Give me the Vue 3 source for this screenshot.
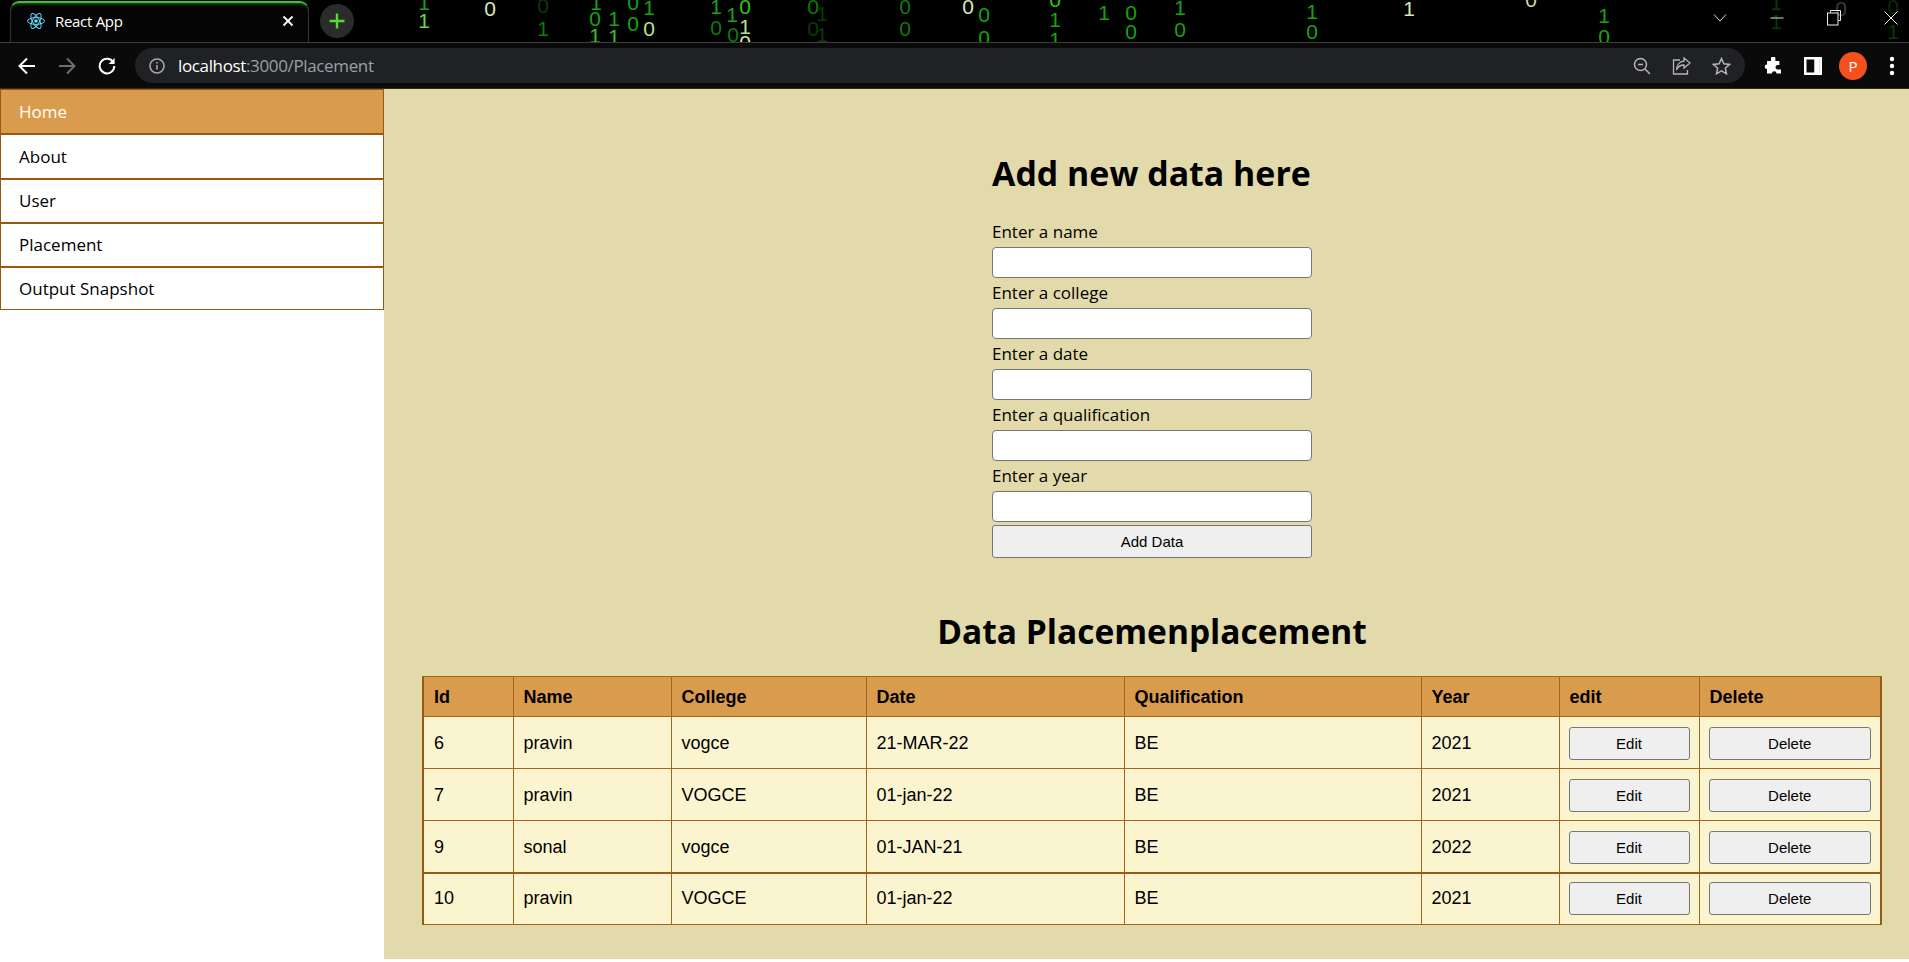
<template>
  <div class="app">
    <!-- Barra del navegador -->
    <header class="browser">
      <div class="strip">
        <span
          v-for="(d, i) in digits"
          :key="i"
          class="digit"
          :style="{ left: d[0] + 'px', top: d[1] + 'px', color: d[3] }"
        >{{ d[2] }}</span>

        <div class="tab">
          <svg class="favicon" width="20" height="20" viewBox="0 0 20 20" fill="none" stroke="#61dafb" stroke-width="1">
            <circle cx="10" cy="10" r="1.8" fill="#61dafb" stroke="none" />
            <ellipse cx="10" cy="10" rx="8.5" ry="3.4" />
            <ellipse cx="10" cy="10" rx="8.5" ry="3.4" transform="rotate(60 10 10)" />
            <ellipse cx="10" cy="10" rx="8.5" ry="3.4" transform="rotate(120 10 10)" />
          </svg>
          <span class="tab-title">React App</span>
          <svg class="tab-close" width="12" height="12" viewBox="0 0 12 12" stroke="#fff" stroke-width="1.8">
            <path d="M1.5 1.5l9 9M10.5 1.5l-9 9" />
          </svg>
        </div>
        <button class="new-tab">
          <svg width="16" height="16" viewBox="0 0 16 16" stroke="#58d936" stroke-width="2.4">
            <path d="M8 0.5v15M0.5 8h15" />
          </svg>
        </button>

        <div class="win-controls">
          <svg width="14" height="10" viewBox="0 0 14 10" fill="none" stroke="#ddd" stroke-width="1">
            <path d="M1 1.5l6 6.5 6-6.5" />
          </svg>
          <svg width="14" height="14" viewBox="0 0 14 14" stroke="#ddd" stroke-width="1">
            <path d="M0.5 7h13" />
          </svg>
          <svg width="14" height="16" viewBox="0 0 14 16" fill="none" stroke="#eee" stroke-width="1">
            <path d="M3.5 2.5v-2h10v10h-2" />
            <rect x="0.5" y="3" width="10.5" height="12" fill="#000" />
          </svg>
          <svg width="14" height="14" viewBox="0 0 14 14" stroke="#eee" stroke-width="1">
            <path d="M0.5 0.5l13 13M13.5 0.5l-13 13" />
          </svg>
        </div>
      </div>

      <div class="toolbar">
        <svg class="nav-icon" width="18" height="18" viewBox="0 0 18 18" fill="none" stroke="#fff" stroke-width="2">
          <path d="M17 9H2M9 1.5L1.5 9 9 16.5" />
        </svg>
        <svg class="nav-icon" width="18" height="18" viewBox="0 0 18 18" fill="none" stroke="#6e6e6e" stroke-width="2">
          <path d="M1 9h15M9 1.5L16.5 9 9 16.5" />
        </svg>
        <svg class="nav-icon" width="18" height="18" viewBox="0 0 18 18" fill="none" stroke="#fff" stroke-width="2">
          <path d="M15.2 5.2A7.3 7.3 0 1 0 16.3 9" />
          <path d="M16.6 1v6h-6z" fill="#fff" stroke="none" />
        </svg>

        <div class="omnibox">
          <svg width="16" height="16" viewBox="0 0 16 16" fill="none" stroke="#a8a8a8" stroke-width="1.6">
            <circle cx="8" cy="8" r="7" />
            <path d="M8 7v4.5M8 4v1.6" />
          </svg>
          <span class="url"><span class="host">localhost</span>:3000/Placement</span>
          <div class="omni-actions">
            <svg width="18" height="18" viewBox="0 0 18 18" fill="none" stroke="#b4b4b4" stroke-width="1.5">
              <circle cx="7.5" cy="7.5" r="6" />
              <path d="M5 7.5h5M12 12l5 5" />
            </svg>
            <svg width="19" height="19" viewBox="0 0 19 19" fill="none" stroke="#b4b4b4" stroke-width="1.3">
              <path d="M8 4H1.5v14h14v-4" />
              <path d="M12 2l6 5-6 5V9C8.500 9 6 10.500 4.500 14 4.500 9 7.500 5.500 12 5z" />
            </svg>
            <svg width="19" height="18" viewBox="0 0 19 18" fill="none" stroke="#b4b4b4" stroke-width="1.5">
              <path d="M9.500 1.500l2.400 5.300 5.700 0.600-4.300 3.800 1.200 5.600-5-2.900-5 2.900 1.200-5.600-4.300-3.800 5.700-0.600z" />
            </svg>
          </div>
        </div>

        <div class="tools">
          <svg width="18" height="18" viewBox="0 0 18 18" fill="#fff">
            <path d="M7 1.500a2.200 2.200 0 0 1 4.400 0V4h4v4h-1.600a2.300 2.300 0 0 0 0 4.600H17v4h-4.500a2.300 2.300 0 0 0-4.600 0H3v-4.500a2.300 2.300 0 0 1 0-4.600V4h4z" />
          </svg>
          <svg width="18" height="18" viewBox="0 0 18 18" fill="none" stroke="#fff" stroke-width="2.500">
            <rect x="1.250" y="1.250" width="15.500" height="15.500" />
            <path d="M13 1v16" stroke-width="5.500" />
          </svg>
          <span class="avatar">P</span>
          <svg class="dots" width="6" height="20" viewBox="0 0 6 20" fill="#fff">
            <circle cx="3" cy="3" r="2.200" />
            <circle cx="3" cy="10" r="2.200" />
            <circle cx="3" cy="17" r="2.200" />
          </svg>
        </div>
      </div>
    </header>

    <div class="page">
      <!-- Sidebar -->
      <aside class="sidebar">
        <a
          v-for="(link, i) in links"
          :key="link"
          :class="['side-link', { active: i === 0 }]"
        >{{ link }}</a>
      </aside>

      <!-- Contenido principal -->
      <main class="content">
        <form class="add-form" @submit.prevent>
          <h2>Add new data here</h2>
          <template v-for="f in fields" :key="f">
            <label>Enter a {{ f }}</label>
            <input type="text" />
          </template>
          <button class="add-btn" type="button">Add Data</button>
        </form>

        <h2 class="table-title">Data Placemenplacement</h2>

        <table class="data-table">
          <colgroup>
            <col v-for="(w, i) in colWidths" :key="i" :style="{ width: w + 'px' }" />
          </colgroup>
          <thead>
            <tr>
              <th v-for="h in headers" :key="h">{{ h }}</th>
            </tr>
          </thead>
          <tbody>
            <tr v-for="row in rows" :key="row.id" :class="{ 'thick-top': row.id === 10 }">
              <td>{{ row.id }}</td>
              <td>{{ row.name }}</td>
              <td>{{ row.college }}</td>
              <td>{{ row.date }}</td>
              <td>{{ row.qualification }}</td>
              <td>{{ row.year }}</td>
              <td class="btn-cell"><button class="row-btn">Edit</button></td>
              <td class="btn-cell"><button class="row-btn">Delete</button></td>
            </tr>
          </tbody>
        </table>
      </main>
    </div>
  </div>
</template>

<script setup>
const links = ['Home', 'About', 'User', 'Placement', 'Output Snapshot']
const fields = ['name', 'college', 'date', 'qualification', 'year']
const headers = ['Id', 'Name', 'College', 'Date', 'Qualification', 'Year', 'edit', 'Delete']
const colWidths = [90, 158, 195, 258, 297, 138, 140, 182]

const rows = [
  { id: 6, name: 'pravin', college: 'vogce', date: '21-MAR-22', qualification: 'BE', year: 2021 },
  { id: 7, name: 'pravin', college: 'VOGCE', date: '01-jan-22', qualification: 'BE', year: 2021 },
  { id: 9, name: 'sonal', college: 'vogce', date: '01-JAN-21', qualification: 'BE', year: 2022 },
  { id: 10, name: 'pravin', college: 'VOGCE', date: '01-jan-22', qualification: 'BE', year: 2021 }
]

const G = '#17a30f'
const B = '#33c41c'
const M = '#0f7a0a'
const D = '#0a3a06'
const P = '#d9e8b4'

// x centro, y centro, digito, color
const digits = [
  [424, 3, '1', G], [424, 21, '1', '#6ad64a'], [490, 9, '0', P], [543, 6, '0', D], [543, 29, '1', M],
  [596, 3, '1', G], [595, 19, '0', G], [614, 19, '1', G], [633, 3, '0', G], [633, 24, '0', G],
  [595, 36, '1', B], [614, 37, '1', B], [649, 8, '1', G], [649, 29, '0', '#b6e486'], [716, 7, '1', G],
  [716, 28, '0', M], [732, 15, '1', G], [733, 35, '0', M], [745, 7, '0', B], [745, 27, '1', '#b6e486'],
  [745, 43, '0', P], [813, 7, '0', M], [822, 14, '1', D], [813, 29, '0', D], [822, 35, '1', D],
  [905, 7, '0', M], [905, 29, '0', M], [968, 7, '0', P], [984, 15, '0', G], [984, 38, '0', G],
  [1055, 0, '0', B], [1055, 20, '1', G], [1055, 40, '1', G], [1104, 13, '1', G], [1131, 13, '0', G],
  [1131, 32, '0', G], [1180, 8, '1', G], [1180, 30, '0', G], [1312, 12, '1', G], [1312, 32, '0', G],
  [1409, 9, '1', P], [1531, 0, '0', '#c8d89a'], [1604, 16, '1', G], [1604, 37, '0', G],
  [1776, 3, '1', D], [1776, 22, '1', D], [1841, 9, '0', '#3c3c30'], [1893, 7, '0', '#0c2a08'], [1893, 32, '1', D]
]
</script>

<style>
html, body {
  background: #fff;
  overflow: hidden;
}
</style>

<style scoped>
.app {
  font-family: "Open Sans", "Noto Sans", sans-serif;
  color: #000;
}

/* === Navegador === */
.browser {
  height: 89px;
  background: #0a0a0a;
  border-bottom: 1px solid #3a2a14;
  box-sizing: border-box;
}

.strip {
  position: relative;
  height: 43px;
  background: #000;
  border-bottom: 1px solid #3e3e3e;
  box-sizing: border-box;
  overflow: hidden;
  display: flex;
  align-items: flex-start;
}

.digit {
  position: absolute;
  font-family: "Liberation Sans", sans-serif;
  font-size: 21px;
  line-height: 16px;
  width: 14px;
  margin-left: -7px;
  margin-top: -8px;
  text-align: center;
}

.tab {
  position: relative;
  margin: 1px 0 0 10px;
  width: 299px;
  height: 42px;
  background: #050505;
  border-top: 2px solid #3fc22f;
  border-left: 1px solid #333;
  border-right: 1px solid #333;
  border-radius: 9px 9px 0 0;
  box-sizing: border-box;
  display: flex;
  align-items: center;
  padding: 0 14px 4px 15px;
  box-shadow: inset 0 3px 3px -2px rgba(63, 194, 47, 0.5);
}

.tab-title {
  margin-left: 9px;
  color: #fff;
  font-size: 15px;
  letter-spacing: -0.3px;
  flex: 1;
}

.new-tab {
  position: relative;
  margin: 4px 0 0 11px;
  width: 34px;
  height: 34px;
  border-radius: 50%;
  border: none;
  background: #292c29;
  display: flex;
  align-items: center;
  justify-content: center;
  padding: 0;
}

.win-controls {
  position: relative;
  margin-left: auto;
  width: 185px;
  height: 36px;
  margin-right: 11px;
  display: flex;
  align-items: center;
  justify-content: space-between;
}

.toolbar {
  height: 45px;
  display: flex;
  align-items: center;
  padding-left: 18px;
}

.nav-icon {
  margin-right: 22px;
}

.omnibox {
  width: 1610px;
  margin-left: -3px;
  height: 35px;
  background: #202124;
  border-radius: 18px;
  display: flex;
  align-items: center;
  padding: 0 14px;
  box-sizing: border-box;
}

.url {
  margin-left: 13px;
  color: #9aa0a6;
  font-size: 17px;
  letter-spacing: -0.36px;
}

.host {
  color: #fff;
}

.omni-actions {
  margin-left: auto;
  display: flex;
  align-items: center;
  gap: 21px;
}

.tools {
  flex: 1;
  display: flex;
  align-items: center;
  padding-left: 19px;
  gap: 22px;
}

.avatar {
  width: 28px;
  height: 28px;
  margin: 0 -1px 0 -5px;
  border-radius: 50%;
  background: #f4511e;
  color: #fff;
  font-size: 15px;
  display: flex;
  align-items: center;
  justify-content: center;
}

.dots {
  margin-left: 1px;
}

/* === Layout === */
.page {
  display: flex;
}

.sidebar {
  width: 384px;
  flex-shrink: 0;
  display: flex;
  flex-direction: column;
  align-self: flex-start;
}

.side-link {
  height: 44.3px;
  box-sizing: border-box;
  padding: 0 0 0.6px 18px;
  border: 1px solid #965a14;
  border-bottom-width: 0;
  border-top-width: 2px;
  display: flex;
  align-items: center;
  background: #fff;
  font-size: 17px;
  color: #000;
}

.side-link:last-child {
  border-bottom-width: 1px;
}

.side-link.active {
  background: #d99c4e;
  color: #fff;
  border-top-width: 1px;
}

.content {
  flex: 1;
  background: #e2daaa;
  height: 870px;
  padding: 64px 28px 0 38px;
  box-sizing: border-box;
}

/* === Formulario === */
.add-form {
  width: 320px;
  margin: 0 auto;
  display: flex;
  flex-direction: column;
}

.add-form h2 {
  margin: 0 0 24px;
  font-size: 33.9px;
  line-height: 40px;
  font-weight: 700;
  white-space: nowrap;
}

.add-form label {
  height: 30px;
  font-size: 17px;
  line-height: 30px;
}

.add-form input {
  height: 31px;
  box-sizing: border-box;
  border: 1px solid #767676;
  border-radius: 4px;
  background: #fff;
  padding: 0;
}

.add-btn {
  margin-top: 3px;
  height: 33px;
  background: #efefef;
  border: 1px solid #767676;
  border-radius: 3px;
  font-family: "Liberation Sans", sans-serif;
  font-size: 15px;
  color: #000;
}

.table-title {
  margin: 50px 0 22px;
  text-align: center;
  font-size: 33.5px;
  line-height: 46px;
  font-weight: 700;
}

/* === Tabla === */
.data-table {
  width: 1458px;
  table-layout: fixed;
  border-collapse: collapse;
  border-style: solid;
  border-color: #965a14;
  border-width: 1px 2px;
  font-family: "Liberation Sans", sans-serif;
  font-size: 18px;
}

.data-table th,
.data-table td {
  border: 1px solid #a5661c;
  padding: 1px 10px 0;
  text-align: left;
}

.data-table td.btn-cell {
  padding: 1px 9px 0;
}

.data-table th {
  height: 38px;
  background: #d99c4e;
  font-weight: 700;
}

.data-table td {
  height: 50px;
  background: #faf5cf;
}

.data-table .thick-top td {
  height: 49.5px;
  padding-top: 0;
  border-top: 2px solid #965a14;
}

.row-btn {
  display: block;
  width: 100%;
  height: 33px;
  background: #efefef;
  border: 1px solid #767676;
  border-radius: 3px;
  font-family: "Liberation Sans", sans-serif;
  font-size: 15px;
  color: #000;
}
</style>
